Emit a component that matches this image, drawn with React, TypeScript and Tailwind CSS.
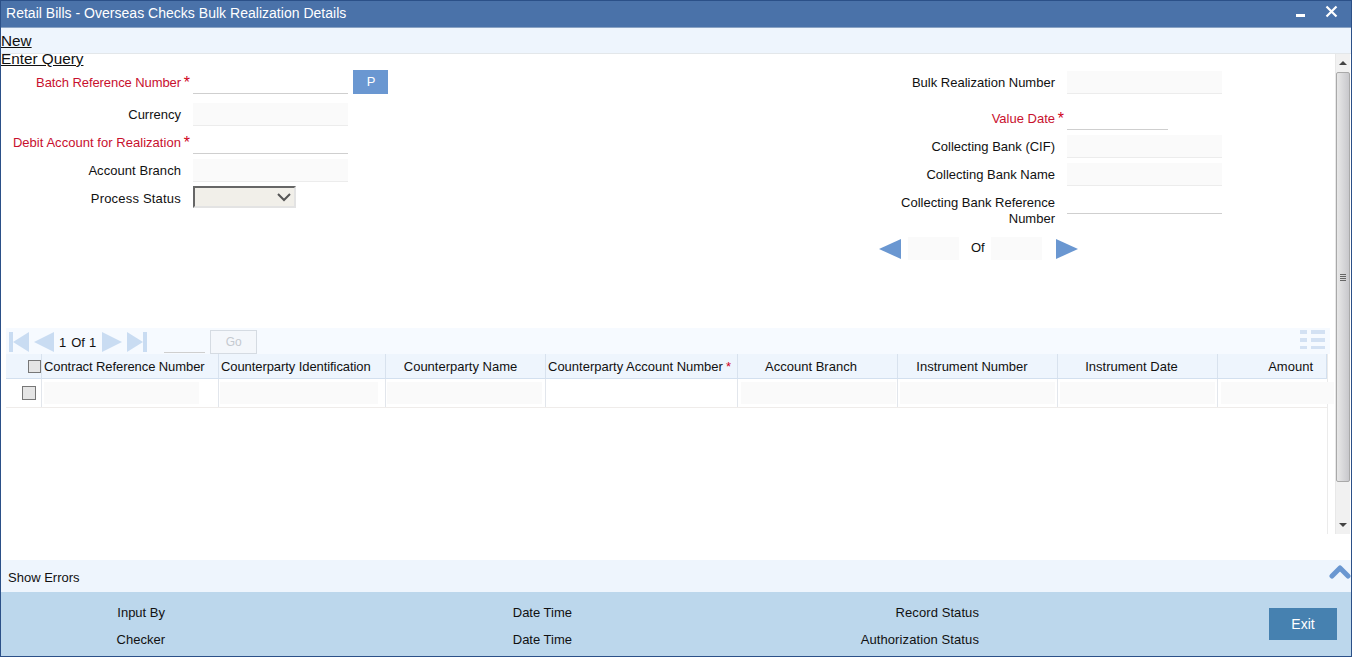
import React from "react";

const Req = () => <span className="absolute -right-[9px] -top-[2px] text-[16px] leading-[20px] text-[#d0021b]">*</span>;

function Field({ label, req, labelW, top, inputW = "w-[155px]", editable, tr = "" }: { label: string; req?: boolean; labelW: string; top: string; inputW?: string; editable?: boolean; tr?: string }) {
  return (
    <div className={`flex items-start ${top}`}>
      <div className={`${labelW} pt-[4px] ${tr} text-right leading-[16px] ${req ? "text-[#c8102e]" : "text-[#111]"}`}>
        <span className="relative">{label}{req && <Req />}</span>
      </div>
      <div className={`ml-[12px] ${inputW} h-[23px] border-b ${editable ? "border-[#cfcfcf] bg-white" : "border-[#ececec] bg-[#fafafa]"}`} />
    </div>
  );
}

const Tri = ({ dir, cls }: { dir: "l" | "r"; cls: string }) => (
  <svg width="23" height="20" viewBox="0 0 23 20" className={cls}>
    <polygon points={dir === "l" ? "0,10 22,0 22,20" : "1,0 23,10 1,20"} fill="currentColor" />
  </svg>
);

const cols: { w: string; label: string; cls: string; cell: string; req?: boolean }[] = [
  { w: "w-[177px]", label: "Contract Reference Number", cls: "justify-start pl-[2px] tracking-[-0.08px]", cell: "w-[155px] ml-[2px]" },
  { w: "w-[167px]", label: "Counterparty Identification", cls: "justify-start pl-[2px] tracking-[-0.08px]", cell: "w-[158px] ml-[1px]" },
  { w: "w-[160px]", label: "Counterparty Name", cls: "justify-center pr-[10px]", cell: "w-[155px] ml-[1px]" },
  { w: "w-[192px]", label: "Counterparty Account Number", cls: "justify-start pl-[2px]", cell: "w-0", req: true },
  { w: "w-[160px]", label: "Account Branch", cls: "justify-center pr-[13px]", cell: "w-[155px] ml-[3px]" },
  { w: "w-[160px]", label: "Instrument Number", cls: "justify-center pr-[11px]", cell: "w-[155px] ml-[2px]" },
  { w: "w-[160px]", label: "Instrument Date", cls: "justify-center pr-[12px]", cell: "w-[155px] ml-[2px]" },
];

export default function App() {
  return (
    <div className="relative flex h-[657px] w-[1352px] flex-col overflow-hidden border border-[#2b5088] bg-white text-[13px] text-[#111]" style={{ fontFamily: '"Liberation Sans", Arial, sans-serif' }}>
      {/* title bar */}
      <div className="flex h-[27px] shrink-0 items-center justify-between border-b border-[#8aa3c4] bg-[#4a72a9] pl-[5px] pr-[13px] text-white">
        <span className="-mt-[2px] text-[14px] leading-[24px] tracking-[0.02px]">Retail Bills - Overseas Checks Bulk Realization Details</span>
        <div className="flex items-center gap-[20px]">
          <div className="mt-[3px] h-[3px] w-[9px] bg-white" />
          <svg width="13" height="13" viewBox="0 0 13 13" className="-mt-[6px]"><path d="M1.5 1.5 L11.5 11.5 M11.5 1.5 L1.5 11.5" stroke="white" strokeWidth="2.2" /></svg>
        </div>
      </div>
      {/* toolbar */}
      <div className="h-[26px] shrink-0 border-b border-[#e3e7ea] bg-[#eef5fd] pt-[4px] text-[15.3px] leading-[18px]">
        <span className="underline">New</span>
      </div>

      {/* scroll area */}
      <div className="relative flex h-[480px] shrink-0">
        <div className="min-w-0 flex-1">
          <div className="relative -mt-[4px] h-[18px] text-[15.3px] leading-[18px]">
            <span className="underline">Enter Query</span>
          </div>
          {/* form */}
          <div className="flex h-[260px] justify-between pt-[3px]">
            <div className="flex flex-col">
              <div className="flex items-start">
                <Field label="Batch Reference Number" req labelW="w-[180px]" top="" editable tr="tracking-[-0.08px]" />
                <div className="-mt-[1px] ml-[5px] flex h-[24px] w-[35px] items-center justify-center bg-[#6a97d1] pl-[1px] text-[13px] text-white">P</div>
              </div>
              <Field label="Currency" labelW="w-[180px]" top="mt-[9px]" />
              <Field label="Debit Account for Realization" req labelW="w-[180px]" top="mt-[5px]" editable tr="tracking-[0.04px]" />
              <Field label="Account Branch" labelW="w-[180px]" top="mt-[5px]" tr="tracking-[0.06px]" />
              <div className="mt-[4px] flex items-start">
                <div className="w-[180px] pt-[5px] text-right leading-[16px] tracking-[0.2px]">Process Status</div>
                <div className="ml-[12px] flex h-[22px] w-[103px] items-center justify-end border-2 border-b-[#e3e3e3] border-l-[#666] border-r-[#e3e3e3] border-t-[#666] bg-[#f1efe9] pr-[3px]">
                  <svg width="14" height="9" viewBox="0 0 14 9"><path d="M1 1 L7 7 L13 1" fill="none" stroke="#555" strokeWidth="2" /></svg>
                </div>
              </div>
            </div>
            <div className="mr-[113px] flex flex-col">
              <Field label="Bulk Realization Number" labelW="w-[200px]" top="" />
              <Field label="Value Date" req labelW="w-[200px]" top="mt-[13px]" inputW="w-[101px]" editable />
              <Field label="Collecting Bank (CIF)" labelW="w-[200px]" top="mt-[5px]" />
              <Field label="Collecting Bank Name" labelW="w-[200px]" top="mt-[5px]" />
              <Field label="Collecting Bank Reference Number" labelW="w-[200px]" top="mt-[5px]" editable />
              <div className="ml-[24px] mt-[10px] flex items-center">
                <Tri dir="l" cls="text-[#6a97d1]" />
                <div className="ml-[6px] h-[23px] w-[51px] bg-[#fafafa]" />
                <span className="-mt-[2px] ml-[12px] w-[20px]">Of</span>
                <div className="h-[23px] w-[51px] bg-[#fafafa]" />
                <Tri dir="r" cls="ml-[13px] text-[#6a97d1]" />
              </div>
            </div>
          </div>

          {/* grid */}
          <div className="mx-[5px] flex h-[206px] flex-col">
            <div className="flex h-[26px] shrink-0 items-end justify-between bg-[#f6faff] pb-[2px] pl-[3px]">
              <div className="flex items-end text-[#111]">
                <svg width="20" height="20" viewBox="0 0 20 20"><rect x="0" y="0" width="4" height="20" fill="#c9dcf2" /><polygon points="20,0 20,20 4,10" fill="#c9dcf2" /></svg>
                <svg width="20" height="20" viewBox="0 0 20 20" className="ml-[5px]"><polygon points="20,0 20,20 0,10" fill="#c9dcf2" /></svg>
                <span className="ml-[5px] leading-[19px]">1</span>
                <span className="ml-[5px] leading-[19px]">Of</span>
                <span className="ml-[4px] leading-[19px]">1</span>
                <svg width="20" height="20" viewBox="0 0 20 20" className="ml-[6px]"><polygon points="0,0 0,20 20,10" fill="#c9dcf2" /></svg>
                <svg width="20" height="20" viewBox="0 0 20 20" className="ml-[5px]"><polygon points="0,0 0,20 16,10" fill="#c9dcf2" /><rect x="16" y="0" width="4" height="20" fill="#c9dcf2" /></svg>
                <div className="-mb-[1px] ml-[17px] h-[23px] w-[41px] border-b border-[#cfcfcf]" />
                <div className="-mb-[2px] ml-[5px] flex h-[24px] w-[47px] items-center justify-center border border-[#d5dbe2] bg-[#f4f7fb] text-[12px] text-[#c4c9cf]">Go</div>
              </div>
              <svg width="25" height="20" viewBox="0 0 25 20" className="mb-[2px] mr-[5px]">
                <g fill="#d3e1f3"><rect x="0" y="0" width="7" height="4" /><rect x="11" y="0" width="14" height="4" /><rect x="0" y="8" width="7" height="4" /><rect x="11" y="8" width="14" height="4" /><rect x="0" y="16" width="7" height="3" /><rect x="11" y="16" width="14" height="3" /></g>
              </svg>
            </div>
            <div className="flex min-h-0 w-[1322px] flex-1 flex-col border-r border-[#ebebeb]">
              <div className="flex h-[25px] shrink-0 border-b border-r border-[#d3e0ef] bg-[#eef5fd]">
                <div className="flex w-[36px] shrink-0 items-center justify-end border-r border-[#d8e2ee] pt-[1px]">
                  <div className="h-[13px] w-[13px] border border-[#777] bg-[#e5e5e5]" />
                </div>
                {cols.map((c) => (
                  <div key={c.label} className={`${c.w} ${c.cls} flex shrink-0 items-center whitespace-nowrap border-r border-[#d8e2ee] pt-[1px]`}>
                    <span>{c.label}</span>
                    {c.req && <span className="ml-[3px] text-[#d0021b]">*</span>}
                  </div>
                ))}
                <div className="flex flex-1 items-center justify-end pr-[13px] pt-[1px]">Amount</div>
              </div>
              <div className="flex h-[29px] shrink-0 border-b border-[#efecea]">
                <div className="flex w-[36px] shrink-0 items-center justify-end border-r border-[#e2e6ec] pr-[5px]">
                  <div className="h-[14px] w-[14px] border border-[#777] bg-[#e5e5e5]" />
                </div>
                {cols.map((c) => (
                  <div key={c.label} className={`${c.w} shrink-0 border-r border-[#e2e6ec] pt-[3px]`}>
                    <div className={`h-[22px] bg-[#fafafa] ${c.cell}`} />
                  </div>
                ))}
                <div className="flex-1 pl-[3px] pt-[3px]"><div className="h-[22px] w-[113px] bg-[#fafafa]" /></div>
              </div>
            </div>
          </div>
        </div>
        {/* scrollbar */}
        <div className="mr-[1px] flex w-[15px] shrink-0 flex-col items-center border-l border-[#e8e8e8] bg-[#f1f1f1]">
          <div className="flex h-[18px] w-full shrink-0 items-center justify-center"><div className="border-x-[4px] border-b-[4px] border-x-transparent border-b-[#444]" /></div>
          <div className="flex h-[410px] w-full shrink-0 items-center justify-center rounded-[2px] border border-[#a9a9a9] bg-gradient-to-r from-[#e8e8e8] to-[#c8c8cc]">
            <div className="flex flex-col gap-[1px]"><div className="h-px w-[6px] bg-[#666]" /><div className="h-px w-[6px] bg-[#666]" /><div className="h-px w-[6px] bg-[#666]" /><div className="h-px w-[6px] bg-[#666]" /></div>
          </div>
          <div className="flex flex-1 items-end justify-center pb-[7px]"><div className="border-x-[4px] border-t-[4px] border-x-transparent border-t-[#444]" /></div>
        </div>
      </div>

      <div className="min-h-0 flex-1" />

      {/* show errors */}
      <div className="relative flex h-[32px] shrink-0 items-center justify-between bg-[#eef5fd] pl-[7px]">
        <span className="mt-[3px] leading-[16px]">Show Errors</span>
        <svg width="22" height="15" viewBox="0 0 22 15" className="-mt-[9px]"><path d="M3 12 L11 4 L19 12" fill="none" stroke="#6a97d1" strokeWidth="5" strokeLinejoin="round" strokeLinecap="round" /></svg>
      </div>
      {/* audit */}
      <div className="flex h-[64px] shrink-0 items-center bg-[#bcd7ec]">
        <div className="grid h-full w-[978px] shrink-0 grid-cols-[164px_407px_407px] grid-rows-2 pb-[3px] pt-[7px] text-right leading-[27px]">
          <span>Input By</span><span>Date Time</span><span className="tracking-[0.08px]">Record Status</span>
          <span>Checker</span><span>Date Time</span><span className="tracking-[0.1px]">Authorization Status</span>
        </div>
        <div className="ml-[290px] flex h-[32px] w-[68px] items-center justify-center bg-[#4681b0] text-[14px] text-white">Exit</div>
      </div>
    </div>
  );
}
